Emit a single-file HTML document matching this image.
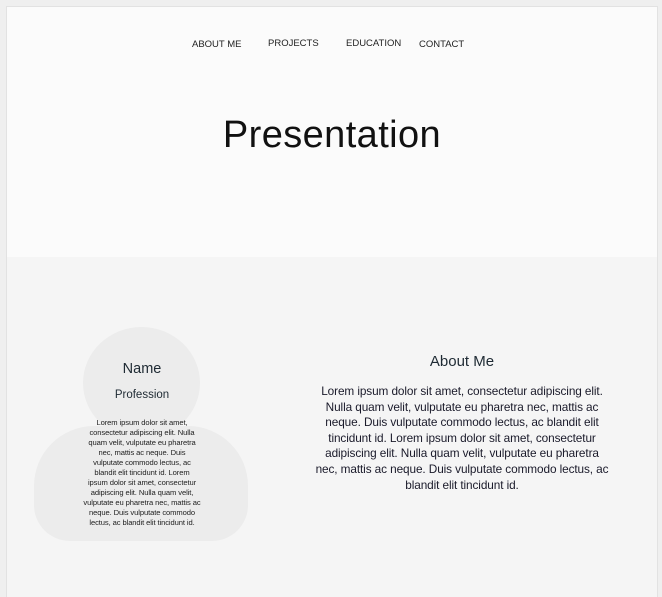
<!DOCTYPE html>
<html><head><meta charset="utf-8"><style>
body{margin:0;width:662px;height:590px;background:#efefef;position:relative;overflow:hidden;font-family:"Liberation Sans",sans-serif;color:#222}
.frame{position:absolute;left:6px;top:6px;width:650px;height:590px;background:#f5f5f5;border-left:1px solid #e2e2e2;border-top:1px solid #e2e2e2;border-right:1px solid #e2e2e2}
.top{position:absolute;left:0;top:0;width:650px;height:250px;background:#fbfbfb}
.nav{position:absolute;font-size:9.5px;color:#222;white-space:nowrap}
h1{position:absolute;left:0;width:650px;top:107px;margin:0;text-align:center;font-weight:normal;font-size:38px;color:#111;letter-spacing:0.4px}
.circ{position:absolute;left:76px;top:320px;width:117px;height:112px;border-radius:50%;background:#ececec}
.bod{position:absolute;left:27px;top:419px;width:214px;height:115px;background:#ececec;border-radius:60px 60px 36px 36px}
.c{position:absolute;text-align:center;white-space:nowrap}
</style></head><body>
<div class="frame">
<div class="top"></div>
<div class="nav" style="left:185px;top:32px">ABOUT ME</div>
<div class="nav" style="left:261px;top:31px">PROJECTS</div>
<div class="nav" style="left:339px;top:31px">EDUCATION</div>
<div class="nav" style="left:412px;top:32px">CONTACT</div>
<h1>Presentation</h1>
<div class="bod"></div>
<div class="circ"></div>
<div class="c" style="left:85px;width:100px;top:354px;font-size:14.5px;color:#1e2a33">Name</div>
<div class="c" style="left:85px;width:100px;top:382px;font-size:11.5px;color:#1e2a33">Profession</div>
<div class="c" style="left:45px;width:180px;top:411px;font-size:7.6px;line-height:10px;letter-spacing:-0.1px">Lorem ipsum dolor sit amet,<br>consectetur adipiscing elit. Nulla<br>quam velit, vulputate eu pharetra<br>nec, mattis ac neque. Duis<br>vulputate commodo lectus, ac<br>blandit elit tincidunt id. Lorem<br>ipsum dolor sit amet, consectetur<br>adipiscing elit. Nulla quam velit,<br>vulputate eu pharetra nec, mattis ac<br>neque. Duis vulputate commodo<br>lectus, ac blandit elit tincidunt id.</div>
<div class="c" style="left:355px;width:200px;top:346px;font-size:15px;color:#1e2a33">About Me</div>
<div class="c" style="left:280px;width:350px;top:377px;font-size:11.8px;line-height:15.6px;letter-spacing:-0.1px;color:#1a1a2a">Lorem ipsum dolor sit amet, consectetur adipiscing elit.<br>Nulla quam velit, vulputate eu pharetra nec, mattis ac<br>neque. Duis vulputate commodo lectus, ac blandit elit<br>tincidunt id. Lorem ipsum dolor sit amet, consectetur<br>adipiscing elit. Nulla quam velit, vulputate eu pharetra<br>nec, mattis ac neque. Duis vulputate commodo lectus, ac<br>blandit elit tincidunt id.</div>
</div>
</body></html>
